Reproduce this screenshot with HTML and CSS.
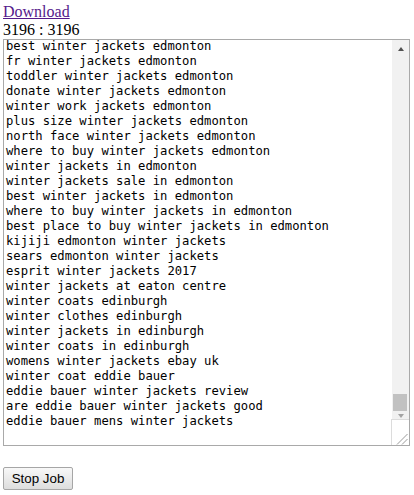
FILE: index.html
```html
<!DOCTYPE html>
<html>
<head>
<meta charset="utf-8">
<link rel="stylesheet" href="styles.css">
</head>
<body>
<a class="dl" href="#">Download</a>
<div class="count">3196 : 3196</div>
<div class="box">
  <div class="lines">
    <div class="lines-inner">best winter jackets edmonton
fr winter jackets edmonton
toddler winter jackets edmonton
donate winter jackets edmonton
winter work jackets edmonton
plus size winter jackets edmonton
north face winter jackets edmonton
where to buy winter jackets edmonton
winter jackets in edmonton
winter jackets sale in edmonton
best winter jackets in edmonton
where to buy winter jackets in edmonton
best place to buy winter jackets in edmonton
kijiji edmonton winter jackets
sears edmonton winter jackets
esprit winter jackets 2017
winter jackets at eaton centre
winter coats edinburgh
winter clothes edinburgh
winter jackets in edinburgh
winter coats in edinburgh
womens winter jackets ebay uk
winter coat eddie bauer
eddie bauer winter jackets review
are eddie bauer winter jackets good
eddie bauer mens winter jackets</div>
  </div>
  <div class="sb">
    <div class="sb-up"><span class="tri-up"></span></div>
    <div class="sb-track"><div class="sb-thumb"></div></div>
    <div class="sb-down"><span class="tri-down"></span></div>
    <div class="sb-corner">
      <svg width="17" height="25" viewBox="0 0 17 25">
        <line x1="5" y1="24.5" x2="15.5" y2="14" stroke="#9a9a9a" stroke-width="1"/>
        <line x1="10" y1="24.5" x2="15.5" y2="19" stroke="#9a9a9a" stroke-width="1"/>
      </svg>
    </div>
  </div>
</div>
<button class="stop" type="button">Stop Job</button>
</body>
</html>
```

FILE: styles.css
```css
html, body {
  margin: 0;
  padding: 0;
}
body {
  margin: 3px;
  font-family: "Liberation Serif", "Times New Roman", serif;
  font-size: 16px;
  color: #000;
  background: #fff;
}
.dl {
  color: #551a8b;
  text-decoration: underline;
}
.count {
  line-height: 18px;
}
.box {
  box-sizing: border-box;
  width: 407px;
  height: 407px;
  margin-top: 0;
  border: 1px solid #a9a9a9;
  display: flex;
  background: #fff;
}
.lines {
  flex: 1;
  overflow: hidden;
  padding: 0 2px;
}
.lines-inner {
  margin-top: -1px;
  white-space: pre;
  font-family: "DejaVu Sans Mono", "Liberation Mono", monospace;
  font-size: 12.2px;
  line-height: 15px;
  color: #000;
}
.sb {
  width: 17px;
  display: flex;
  flex-direction: column;
  background: #f1f1f1;
}
.sb-up {
  height: 17px;
  display: flex;
  justify-content: center;
  align-items: center;
}
.tri-up {
  width: 0;
  height: 0;
  border-left: 3.5px solid transparent;
  border-right: 3.5px solid transparent;
  border-bottom: 4px solid #505050;
}
.sb-track {
  flex: 1;
  display: flex;
  flex-direction: column;
  justify-content: flex-end;
}
.sb-thumb {
  height: 17px;
  margin: 0 2px 0 1px;
  background: #c1c1c1;
}
.sb-down {
  height: 8px;
  display: flex;
  justify-content: center;
  align-items: flex-end;
  padding-bottom: 1px;
  box-sizing: border-box;
}
.tri-down {
  width: 0;
  height: 0;
  border-left: 3.5px solid transparent;
  border-right: 3.5px solid transparent;
  border-top: 4px solid #a3a3a3;
}
.sb-corner {
  height: 26px;
  box-sizing: border-box;
  background: #fff;
  border-top: 1px solid #dcdcdc;
  border-left: 1px solid #dcdcdc;
  margin-left: -1px;
  display: flex;
  justify-content: flex-end;
  align-items: flex-end;
}
.sb-corner svg {
  display: block;
}
.stop {
  display: block;
  margin: 21px 0 0 0;
  box-sizing: border-box;
  width: 70px;
  height: 23px;
  padding: 0;
  font-family: "Liberation Sans", Arial, sans-serif;
  font-size: 13.33px;
  color: #000;
  border: 1px solid #a6a6a6;
  border-radius: 2px;
  background: linear-gradient(#f8f8f8, #dddddd);
}
```
